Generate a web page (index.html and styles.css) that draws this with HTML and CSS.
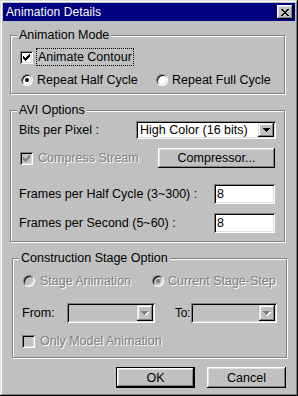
FILE: index.html
```html
<!DOCTYPE html>
<html lang="en">
<head>
    <meta charset="UTF-8">
    <title>Animation Details</title>
    <link rel="stylesheet" href="styles.css">
</head>
<body>
<div class="window">
    <div class="titlebar">
        <span class="title">Animation Details</span>
        <span class="close-btn">
            <svg width="8" height="7" viewBox="0 0 8 7" shape-rendering="crispEdges"><path d="M0 0h2v1h-2z M6 0h2v1h-2z M1 1h2v1h-2z M5 1h2v1h-2z M2 2h4v1h-4z M3 3h2v1h-2z M2 4h4v1h-4z M1 5h2v1h-2z M5 5h2v1h-2z M0 6h2v1h-2z M6 6h2v1h-2z" fill="#000"/></svg>
        </span>
    </div>

    <div class="content">
        <!-- Animation Mode -->
        <fieldset class="group g-mode">
            <legend>Animation Mode</legend>
            <div class="row r-check">
                <span class="check">
                    <svg width="7" height="7" viewBox="0 0 7 7" shape-rendering="crispEdges"><path d="M0 2h1v3h-1z M1 3h1v3h-1z M2 4h1v3h-1z M3 3h1v3h-1z M4 2h1v3h-1z M5 1h1v3h-1z M6 0h1v3h-1z" fill="#000"/></svg>
                </span>
                <span class="focus">Animate Contour</span>
            </div>
            <div class="row r-radios">
                <span class="opt opt-half"><span class="radio on"></span><span class="opt-text">Repeat Half Cycle</span></span>
                <span class="opt"><span class="radio"></span><span class="opt-text">Repeat Full Cycle</span></span>
            </div>
        </fieldset>

        <!-- AVI Options -->
        <fieldset class="group g-avi">
            <legend>AVI Options</legend>
            <div class="row r-bits">
                <span class="lbl">Bits per Pixel :</span>
                <span class="combo combo-bits">
                    <span class="combo-text">High Color (16 bits)</span>
                    <span class="drop">
                        <svg width="7" height="4" viewBox="0 0 7 4" shape-rendering="crispEdges"><path d="M0 0h7v1h-7z M1 1h5v1h-5z M2 2h3v1h-3z M3 3h1v1h-1z" fill="#000"/></svg>
                    </span>
                </span>
            </div>
            <div class="row r-compress">
                <span class="opt">
                    <span class="check disabled">
                        <svg width="7" height="7" viewBox="0 0 7 7" shape-rendering="crispEdges"><path d="M0 2h1v3h-1z M1 3h1v3h-1z M2 4h1v3h-1z M3 3h1v3h-1z M4 2h1v3h-1z M5 1h1v3h-1z M6 0h1v3h-1z" fill="#808080"/></svg>
                    </span>
                    <span class="opt-text dis">Compress Stream</span>
                </span>
                <span class="btn btn-compressor">Compressor...</span>
            </div>
            <div class="row r-frames r-half">
                <span class="lbl">Frames per Half Cycle (3~300) :</span>
                <span class="edit">8</span>
            </div>
            <div class="row r-frames r-sec">
                <span class="lbl">Frames per Second (5~60) :</span>
                <span class="edit">8</span>
            </div>
        </fieldset>

        <!-- Construction Stage Option -->
        <fieldset class="group g-stage">
            <legend>Construction Stage Option</legend>
            <div class="row r-stage">
                <span class="opt opt-stage"><span class="radio disabled"></span><span class="opt-text dis">Stage Animation</span></span>
                <span class="opt opt-step"><span class="radio disabled on"></span><span class="opt-text dis">Current Stage-Step</span></span>
            </div>
            <div class="row r-range">
                <span class="lbl lbl-from">From:</span>
                <span class="combo combo-off combo-from">
                    <span class="combo-text"></span>
                    <span class="drop">
                        <svg width="8" height="5" viewBox="0 0 8 5" shape-rendering="crispEdges"><path d="M1 1h7v1h-7z M2 2h5v1h-5z M3 3h3v1h-3z M4 4h1v1h-1z" fill="#fff"/><path d="M0 0h7v1h-7z M1 1h5v1h-5z M2 2h3v1h-3z M3 3h1v1h-1z" fill="#808080"/></svg>
                    </span>
                </span>
                <span class="lbl lbl-to">To:</span>
                <span class="combo combo-off combo-to">
                    <span class="combo-text"></span>
                    <span class="drop">
                        <svg width="8" height="5" viewBox="0 0 8 5" shape-rendering="crispEdges"><path d="M1 1h7v1h-7z M2 2h5v1h-5z M3 3h3v1h-3z M4 4h1v1h-1z" fill="#fff"/><path d="M0 0h7v1h-7z M1 1h5v1h-5z M2 2h3v1h-3z M3 3h1v1h-1z" fill="#808080"/></svg>
                    </span>
                </span>
            </div>
            <div class="row r-model">
                <span class="check disabled"></span>
                <span class="opt-text dis">Only Model Animation</span>
            </div>
        </fieldset>

        <div class="buttons">
            <span class="btn btn-default">OK</span>
            <span class="btn">Cancel</span>
        </div>
    </div>
</div>
</body>
</html>
```

FILE: styles.css
```css
* {
    box-sizing: border-box;
}

body {
    margin: 0;
    background: #c0c0c0;
    color: #000;
    font: 12.5px/14px "Liberation Sans", Arial, sans-serif;
}

/* window frame */
.window {
    width: 298px;
    height: 396px;
    padding: 3px;
    background: #c0c0c0;
    box-shadow: inset -1px -1px #000, inset 1px 1px #dfdfdf, inset -2px -2px #808080, inset 2px 2px #fff;
}

.titlebar {
    height: 18px;
    background: #000080;
    color: #fff;
    display: flex;
    align-items: center;
    justify-content: space-between;
    padding: 0 2px 0 3px;
    font-size: 12px;
    letter-spacing: 0.1px;
}

.close-btn {
    width: 16px;
    height: 14px;
    background: #c0c0c0;
    display: flex;
    align-items: center;
    justify-content: center;
    box-shadow: inset -1px -1px #000, inset 1px 1px #fff, inset -2px -2px #808080, inset 2px 2px #dfdfdf;
}

.close-btn svg {
    display: block;
    margin-left: -1px;
}

.content {
    padding-top: 7px;
}

/* group boxes */
.group {
    width: 275px;
    margin: 0 0 0 7px;
    border: 1px solid #808080;
    box-shadow: inset 1px 1px #fff, 1px 1px #fff;
    min-width: 0;
}

.group legend {
    margin-left: -3px;
    padding: 0 2px;
    line-height: 14px;
    background: #c0c0c0;
}

.g-mode {
    padding: 6px 9px 4px;
}

.g-avi {
    margin-top: 9px;
    padding: 3px 9px 8px;
}

.g-stage {
    margin: 9px 0 0 9px;
    padding: 7px 9px 7px;
}

.row {
    display: flex;
    align-items: center;
}

.opt {
    display: flex;
    align-items: center;
}

/* checkbox & radio */
.check {
    width: 13px;
    height: 13px;
    flex: none;
    background: #fff;
    display: flex;
    align-items: center;
    justify-content: center;
    box-shadow: inset 1px 1px #808080, inset -1px -1px #fff, inset 2px 2px #000, inset -2px -2px #dfdfdf;
}

.check.disabled {
    background: #c0c0c0;
}

.radio {
    width: 12px;
    height: 12px;
    flex: none;
    border-radius: 50%;
    border: 1px solid;
    border-color: #808080 #fff #fff #808080;
    background: #fff;
    box-shadow: inset 1px 1px #000, inset -1px -1px #dfdfdf;
    display: flex;
    align-items: center;
    justify-content: center;
}

.radio.on::after {
    content: "";
    width: 4px;
    height: 4px;
    border-radius: 50%;
    background: #000;
}

.radio.disabled {
    background: #c0c0c0;
}

.radio.disabled.on::after {
    background: #808080;
}

.dis {
    color: #808080;
    text-shadow: 1px 1px #fff;
}

/* Animation Mode rows */
.r-check {
    height: 18px;
}

.r-check .focus {
    margin-left: 3px;
    padding: 1px;
    border: 1px dotted #000;
    line-height: 14px;
}

.r-radios {
    height: 18px;
    margin-top: 5px;
    padding-left: 1px;
}

.r-radios .opt-text {
    margin-left: 4px;
}

.opt-half {
    width: 135px;
}

/* AVI rows */
.r-bits {
    height: 20px;
    justify-content: space-between;
}

.lbl {
    margin-left: -1px;
    white-space: nowrap;
}

.combo {
    height: 18px;
    background: #fff;
    display: flex;
    align-items: center;
    justify-content: space-between;
    padding: 2px;
    box-shadow: inset 1px 1px #808080, inset -1px -1px #fff, inset 2px 2px #000, inset -2px -2px #dfdfdf;
}

.combo-bits {
    width: 140px;
    margin-right: -1px;
}

.combo-text {
    padding-left: 2px;
}

.drop {
    width: 16px;
    height: 100%;
    background: #c0c0c0;
    display: flex;
    align-items: center;
    justify-content: center;
    box-shadow: inset -1px -1px #000, inset 1px 1px #dfdfdf, inset -2px -2px #808080, inset 2px 2px #fff;
}

.drop svg {
    display: block;
}

.r-compress {
    height: 20px;
    margin-top: 8px;
    justify-content: space-between;
}

.r-compress .opt-text {
    margin-left: 5px;
}

.btn {
    display: flex;
    align-items: center;
    justify-content: center;
    background: #c0c0c0;
    box-shadow: inset -1px -1px #000, inset 1px 1px #fff, inset -2px -2px #808080, inset 2px 2px #dfdfdf;
}

.btn-compressor {
    width: 117px;
    height: 20px;
}

.r-frames {
    height: 20px;
    justify-content: space-between;
}

.r-half {
    margin-top: 16px;
}

.r-sec {
    margin-top: 9px;
}

.edit {
    width: 61px;
    height: 20px;
    background: #fff;
    padding-left: 3px;
    display: flex;
    align-items: center;
    box-shadow: inset 1px 1px #808080, inset -1px -1px #fff, inset 2px 2px #000, inset -2px -2px #dfdfdf;
}

/* Construction Stage rows */
.r-stage {
    height: 18px;
    padding-left: 1px;
}

.opt-stage {
    width: 129px;
}

.opt-stage .opt-text {
    margin-left: 5px;
}

.opt-step .opt-text {
    margin-left: 4px;
}

.r-range {
    height: 20px;
    margin-top: 13px;
}

.combo-off {
    height: 20px;
    background: #c0c0c0;
}

.lbl-from {
    width: 45px;
    flex: none;
    margin-left: 0;
}

.combo-from {
    width: 88px;
    flex: none;
}

.lbl-to {
    flex: none;
    margin-left: 20px;
    font-size: 12px;
    letter-spacing: -0.3px;
}

.combo-to {
    width: 86px;
    flex: none;
    margin-left: auto;
}

.r-model {
    height: 18px;
    margin-top: 9px;
}

.r-model .opt-text {
    margin-left: 5px;
}

/* dialog buttons */
.buttons {
    display: flex;
    justify-content: flex-end;
    gap: 12px;
    margin-top: 9px;
    padding-right: 9px;
}

.buttons .btn {
    width: 79px;
    height: 21px;
}

.btn-default {
    box-shadow: inset 0 0 0 1px #000, inset -2px -2px #000, inset 2px 2px #fff, inset -3px -3px #808080, inset 3px 3px #dfdfdf;
}
```
